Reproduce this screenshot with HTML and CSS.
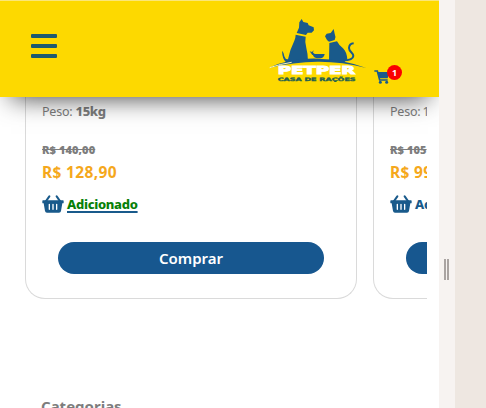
FILE: index.html
```html
<!DOCTYPE html>
<html lang="pt-BR">
<head>
<meta charset="utf-8">
<title>Petper</title>
<link rel="stylesheet" href="styles.css">
</head>
<body>
<svg class="defs" width="0" height="0"><defs>
<symbol id="basket" viewBox="0 0 66 54">
<path d="M22 4 L11 20 M44 4 L55 20" fill="none" stroke="currentColor" stroke-width="6" stroke-linecap="round"/>
<path fill="currentColor" fill-rule="evenodd" d="M3 16H63Q65 16 65 18V23Q65 25 63 25H61L57 48Q56 53 51 53H15Q10 53 9 48L5 25H3Q1 25 1 23V18Q1 16 3 16Z M20 28V43Q20 45 22 45T24 43V28Q24 26 22 26T20 28Z M31 28V43Q31 45 33 45T35 43V28Q35 26 33 26T31 28Z M42 28V43Q42 45 44 45T46 43V28Q46 26 44 26T42 28Z"/>
</symbol>
</defs></svg>
<div class="app">
<header class="header">
<div class="menu"><span></span><span></span><span></span></div>
<svg class="logo" viewBox="27 54 294 198">
<g fill="#195a8b">
<path d="M125 57L130 66L143 69L146 76L161 82L162 91L155 98H143L138 105L110 99L117 83L118 67Z"/>
<path d="M107 104L137 110Q134 124 139 144Q144 163 144 184L78 187Q67 177 66 152Q71 156 73 169Q76 179 84 178Q89 150 103 122Q107 112 107 104Z"/>
<path d="M221 87L224 101Q229 111 224 120L207 125L201 120L195 109L200 101L212 99Z"/>
<path d="M208 129L231 124Q237 136 249 145Q260 155 262 178L253 187L207 183Z"/>
<path d="M158 162H194Q192 174 181 175H171Q160 173 158 162Z"/>
<path d="M149 154L156 156L161 151L159 158L169 165H157Z"/>
<path d="M28 203Q92 174 172 176T319 204Q243 184 172 185T28 203Z"/>
</g>
<path d="M249 181Q279 181 280 168C281 159 267 156 267 144Q268 131 281 130" fill="none" stroke="#195a8b" stroke-width="6"/>
<path d="M29 203Q60 192 95 187" fill="none" stroke="#fff6ad" stroke-width="3"/>
<text class="brand" x="53" y="221" textLength="233" lengthAdjust="spacingAndGlyphs">PETPER</text>
<text class="tagline" x="53" y="244" textLength="234" lengthAdjust="spacingAndGlyphs">CASA DE RAÇÕES</text>
</svg>
<div class="cart">
<svg class="cart-icon" viewBox="0 0 48 42">
<path d="M1 3H10L17 30H41" fill="none" stroke="#195a8b" stroke-width="5"/>
<path d="M11 6H46L41 25H16Z" fill="#195a8b"/>
<circle cx="19" cy="37" r="4.5" fill="#195a8b"/><circle cx="38" cy="37" r="4.5" fill="#195a8b"/>
</svg>
<span class="badge">1</span>
</div>
</header>
<main class="content">
<section class="products">
<article class="card">
<p class="weight">Peso: <b>15kg</b></p>
<p class="old">R$ 140,00</p>
<p class="price">R$ 128,90</p>
<div class="add added"><svg class="basket"><use href="#basket"/></svg><a>Adicionado</a></div>
<div class="buy">Comprar</div>
</article>
<article class="card">
<p class="weight">Peso: <b class="thin">1</b></p>
<p class="old">R$ 105</p>
<p class="price">R$ 99</p>
<div class="add"><svg class="basket"><use href="#basket"/></svg><a>Ad</a></div>
<div class="buy"></div>
</article>
</section>
<h2 class="title">Categorias</h2>
</main>
</div>
<div class="splitter"><i></i><i></i></div>
<aside class="side"></aside>
</body>
</html>
```
FILE: styles.css
```css
* { box-sizing: border-box; }
body { margin: 0; height: 408px; display: flex; overflow: hidden; background: #fff; font-family: "Noto Sans", "Open Sans", sans-serif; color: #7d7d7d; }
p, h2 { margin: 0; white-space: nowrap; }
.defs { position: absolute; }
.app { width: 439px; height: 408px; flex: none; overflow: hidden; }
.header { position: relative; z-index: 1; height: 97px; display: flex; align-items: flex-start; background: #fdd900; border-top: 1px solid #fbe678; box-shadow: 0 12px 24px -11px rgba(0, 0, 0, .75); }
.menu { width: 26px; height: 24px; margin: 33px 0 0 31px; display: flex; flex-direction: column; justify-content: space-between; }
.menu span { height: 4px; border-radius: 1px; background: #1d5b70; }
.logo { width: 98px; height: 66px; margin: 17px 0 0 212px; flex: none; }
.brand { font: 900 34px "DejaVu Sans", sans-serif; fill: #fff; stroke: #fff; stroke-width: 3px; }
.tagline { font: 900 14px "DejaVu Sans", sans-serif; fill: #24604f; stroke: #24604f; stroke-width: 1px; }
.cart { position: relative; width: 16px; height: 14px; margin: 69px 0 0 7px; }
.cart-icon { display: block; width: 16px; height: 14px; }
.badge { position: absolute; left: 13px; top: -5px; width: 15px; height: 15px; border-radius: 50%; background: #fa0000; color: #fff; font-size: 9px; font-weight: 700; line-height: 15px; text-align: center; }
.content { width: 427px; padding-left: 25px; overflow: hidden; }
.products { display: flex; gap: 16px; height: 202px; }
.card { width: 332px; flex: none; padding: 5px 16px 0; border: 1px solid #dadada; border-top: 0; border-radius: 0 0 20px 20px; }
.weight { height: 20px; font-size: 12.5px; line-height: 20px; letter-spacing: -.2px; }
.weight b { font-size: 13px; font-weight: 800; line-height: 1; letter-spacing: -.4px; }
.weight .thin { font-size: 12.5px; font-weight: 400; margin-left: -1px; }
.old { margin-top: 20px; font-size: 11px; font-weight: 900; line-height: 16px; letter-spacing: .1px; text-decoration: line-through; }
.price { margin-top: 3px; font-size: 15.5px; font-weight: 700; line-height: 23px; letter-spacing: .35px; color: #f5a81c; }
.add { display: flex; align-items: center; height: 20px; margin-top: 10px; color: #195a8b; font-size: 13px; font-weight: 800; }
.basket { width: 22px; height: 18px; margin-right: 3px; flex: none; }
.add a { letter-spacing: -.3px; }
.added a { color: #078007; text-decoration: underline #195a8b 2px; text-underline-offset: 2px; text-decoration-skip-ink: none; }
.buy { height: 32px; margin: 28px 16px 0; border-radius: 16px; background: #17578f; color: #fff; font-size: 15px; font-weight: 600; line-height: 32px; text-align: center; }
.title { margin: 95px 0 0 16px; font-size: 15px; line-height: 24px; }
.splitter { width: 16px; height: 408px; flex: none; display: flex; align-items: center; justify-content: center; gap: 1px; background: #f7f3f1; padding: 130px 1px 0 0; }
.splitter i { width: 2px; height: 21px; background: #aaa4a2; }
.side { flex: 1; background: #eee7e1; }
```
